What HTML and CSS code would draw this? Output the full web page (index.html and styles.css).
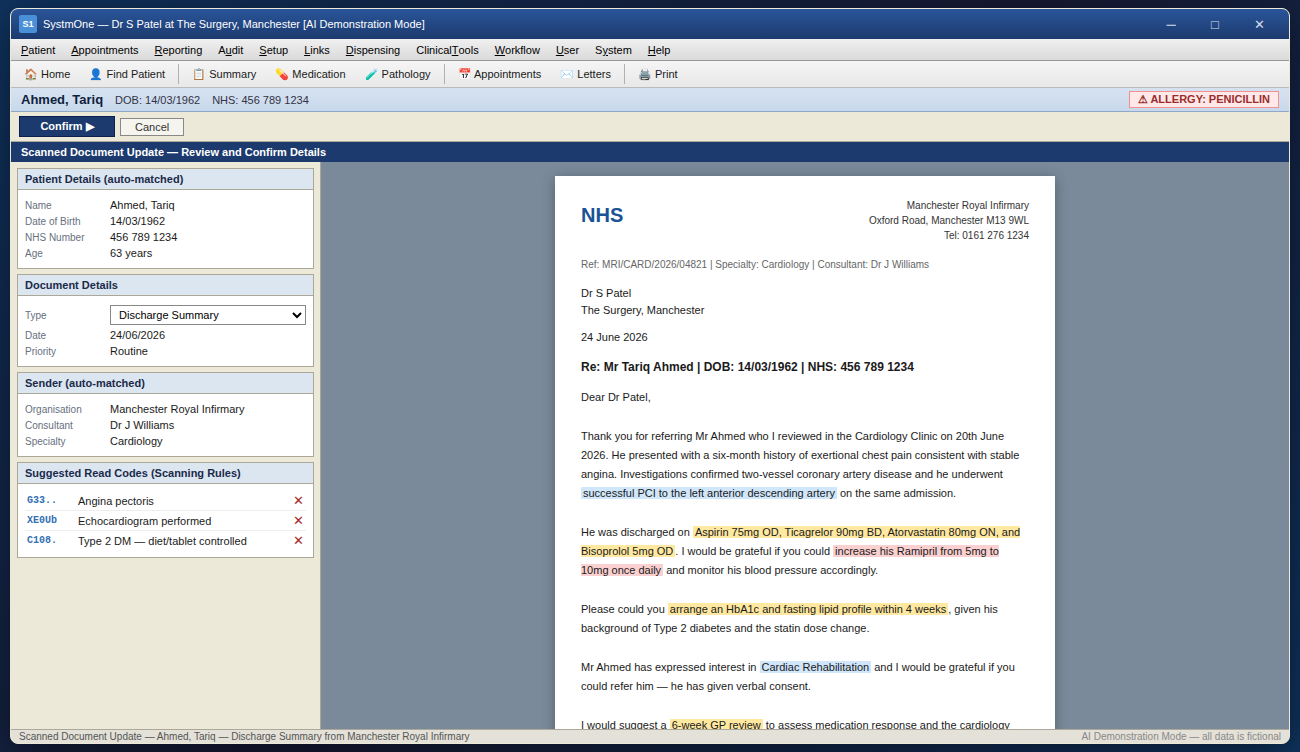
FILE: index.html
```html
<!DOCTYPE html>
<html lang="en">
<head>
<meta charset="utf-8">
<title>SystmOne — Scanned Document Update</title>
<link rel="stylesheet" href="styles.css">
</head>
<body>
<div class="window">
  <header class="titlebar">
    <span class="app-logo">S1</span>
    <span class="app-title">SystmOne — Dr S Patel at The Surgery, Manchester [AI Demonstration Mode]</span>
    <button class="win-btn" type="button" aria-label="Minimise">─</button>
    <button class="win-btn" type="button" aria-label="Maximise">□</button>
    <button class="win-btn" type="button" aria-label="Close">✕</button>
  </header>
  <nav class="menubar">
    <a href="#"><u>P</u>atient</a>
    <a href="#"><u>A</u>ppointments</a>
    <a href="#"><u>R</u>eporting</a>
    <a href="#">A<u>u</u>dit</a>
    <a href="#"><u>S</u>etup</a>
    <a href="#"><u>L</u>inks</a>
    <a href="#"><u>D</u>ispensing</a>
    <a href="#">Clinical<u>T</u>ools</a>
    <a href="#"><u>W</u>orkflow</a>
    <a href="#"><u>U</u>ser</a>
    <a href="#">S<u>y</u>stem</a>
    <a href="#"><u>H</u>elp</a>
  </nav>
  <div class="toolbar">
    <button type="button">🏠 Home</button>
    <button type="button">👤 Find Patient</button>
    <span class="divider"></span>
    <button type="button">📋 Summary</button>
    <button type="button">💊 Medication</button>
    <button type="button">🧪 Pathology</button>
    <span class="divider"></span>
    <button type="button">📅 Appointments</button>
    <button type="button">✉️ Letters</button>
    <span class="divider"></span>
    <button type="button">🖨️ Print</button>
  </div>
  <div class="patient-bar">
    <strong class="patient-name">Ahmed, Tariq</strong>
    <span>DOB: 14/03/1962</span>
    <span>NHS: 456 789 1234</span>
    <strong class="allergy">⚠ ALLERGY: PENICILLIN</strong>
  </div>
  <div class="actions">
    <button class="confirm" type="button">Confirm ▶</button>
    <button class="cancel" type="button">Cancel</button>
  </div>
  <h1 class="section-title">Scanned Document Update — Review and Confirm Details</h1>
  <div class="workspace">
    <aside class="sidebar">
      <section class="card">
        <h2>Patient Details (auto-matched)</h2>
        <dl class="card-body">
          <div class="field"><dt>Name</dt><dd>Ahmed, Tariq</dd></div>
          <div class="field"><dt>Date of Birth</dt><dd>14/03/1962</dd></div>
          <div class="field"><dt>NHS Number</dt><dd>456 789 1234</dd></div>
          <div class="field"><dt>Age</dt><dd>63 years</dd></div>
        </dl>
      </section>
      <section class="card">
        <h2>Document Details</h2>
        <dl class="card-body">
          <div class="field field-select">
            <dt><label for="doc-type">Type</label></dt>
            <dd><select id="doc-type"><option>Discharge Summary</option><option>Clinic Letter</option></select></dd>
          </div>
          <div class="field"><dt>Date</dt><dd>24/06/2026</dd></div>
          <div class="field"><dt>Priority</dt><dd>Routine</dd></div>
        </dl>
      </section>
      <section class="card">
        <h2>Sender (auto-matched)</h2>
        <dl class="card-body">
          <div class="field"><dt>Organisation</dt><dd>Manchester Royal Infirmary</dd></div>
          <div class="field"><dt>Consultant</dt><dd>Dr J Williams</dd></div>
          <div class="field"><dt>Specialty</dt><dd>Cardiology</dd></div>
        </dl>
      </section>
      <section class="card">
        <h2>Suggested Read Codes (Scanning Rules)</h2>
        <ul class="card-body codes">
          <li><code>G33..</code><span>Angina pectoris</span><button type="button" aria-label="Remove G33..">✕</button></li>
          <li><code>XE0Ub</code><span>Echocardiogram performed</span><button type="button" aria-label="Remove XE0Ub">✕</button></li>
          <li><code>C108.</code><span>Type 2 DM — diet/tablet controlled</span><button type="button" aria-label="Remove C108.">✕</button></li>
        </ul>
      </section>
    </aside>
    <main class="viewer">
      <article class="letter">
        <div class="letterhead">
          <strong class="nhs">NHS</strong>
          <address>Manchester Royal Infirmary<br>Oxford Road, Manchester M13 9WL<br>Tel: 0161 276 1234</address>
        </div>
        <p class="reference">Ref: MRI/CARD/2026/04821 | Specialty: Cardiology | Consultant: Dr J Williams</p>
        <p class="recipient">Dr S Patel<br>The Surgery, Manchester</p>
        <p class="date">24 June 2026</p>
        <h3>Re: Mr Tariq Ahmed | DOB: 14/03/1962 | NHS: 456 789 1234</h3>
        <div class="letter-text">
          <p>Dear Dr Patel,</p>
          <p>Thank you for referring Mr Ahmed who I reviewed in the Cardiology Clinic on 20th June 2026. He presented with a six-month history of exertional chest pain consistent with stable angina. Investigations confirmed two-vessel coronary artery disease and he underwent <mark class="info">successful PCI to the left anterior descending artery</mark> on the same admission.</p>
          <p>He was discharged on <mark>Aspirin 75mg OD, Ticagrelor 90mg BD, Atorvastatin 80mg ON, and Bisoprolol 5mg OD</mark>. I would be grateful if you could <mark class="change">increase his Ramipril from 5mg to 10mg once daily</mark> and monitor his blood pressure accordingly.</p>
          <p>Please could you <mark>arrange an HbA1c and fasting lipid profile within 4 weeks</mark>, given his background of Type 2 diabetes and the statin dose change.</p>
          <p>Mr Ahmed has expressed interest in <mark class="info">Cardiac Rehabilitation</mark> and I would be grateful if you could refer him — he has given verbal consent.</p>
          <p>I would suggest a <mark>6-week GP review</mark> to assess medication response and the cardiology</p>
        </div>
      </article>
    </main>
  </div>
  <footer class="statusbar">
    <span>Scanned Document Update — Ahmed, Tariq — Discharge Summary from Manchester Royal Infirmary</span>
    <span class="demo">AI Demonstration Mode — all data is fictional</span>
  </footer>
</div>
</body>
</html>
```
FILE: styles.css
```css
* { box-sizing: border-box; margin: 0; padding: 0; }

body {
  height: 100vh;
  padding: 8px 10px;
  background: linear-gradient(135deg, #0f3460 0%, #171a34 50%, #0f3460 100%);
  font-family: "Liberation Sans", Arial, sans-serif;
  font-size: 11px;
  color: #1a1a1a;
  overflow: hidden;
}

button, select { font: inherit; color: inherit; }
button { background: none; border: 0; white-space: nowrap; }

.window {
  display: flex;
  flex-direction: column;
  height: 100%;
  border: 1px solid #ece9d8;
  border-radius: 8px;
  background: #ece9d8;
  box-shadow: 0 8px 40px rgba(0, 0, 0, 0.5);
  overflow: hidden;
}

.titlebar {
  display: flex;
  flex: none;
  align-items: center;
  height: 30px;
  padding: 0 8px;
  background: linear-gradient(#2a5599, #1c3a6e);
  color: #fff;
}
.app-logo {
  width: 18px;
  margin-right: 6px;
  border-radius: 2px;
  background: #4a90d9;
  font-size: 9px;
  font-weight: bold;
  line-height: 18px;
  text-align: center;
}
.app-title { flex: 1; }
.win-btn { width: 44px; height: 30px; font-size: 13px; color: #d4ddeb; }

.menubar {
  display: flex;
  flex: none;
  height: 22px;
  padding: 0 2px;
  background: linear-gradient(#f0f0f0, #dadada);
  border-bottom: 1px solid #999;
}
.menubar a { padding: 0 8px; line-height: 22px; color: #000; text-decoration: none; }
.menubar u { font-kerning: none; }

.toolbar {
  display: flex;
  flex: none;
  align-items: center;
  gap: 1px;
  height: 27px;
  padding: 0 4px;
  background: linear-gradient(#f5f5f5, #e8e8e8);
  border-bottom: 1px solid #bbb;
}
.toolbar button { padding: 0 9px; line-height: 20px; }
.divider { width: 1px; height: 20px; margin: 0 3px; background: #b0b0b0; }

.patient-bar {
  display: flex;
  flex: none;
  align-items: center;
  gap: 12px;
  height: 24px;
  padding: 0 10px;
  background: linear-gradient(#d6e2f0, #c8d8ec);
  border-bottom: 1px solid #8fa8c8;
  color: #334;
}
.patient-name { font-size: 13px; color: #0f1f3d; }
.allergy {
  margin-left: auto;
  padding: 0 8px;
  border: 1px solid #f09090;
  background: #ffe8e8;
  color: #9b2c2c;
  line-height: 15px;
}

.actions {
  display: flex;
  flex: none;
  align-items: center;
  gap: 5px;
  height: 30px;
  padding: 0 8px;
  border-bottom: 1px solid #aca899;
}
.confirm {
  min-width: 96px;
  padding: 0 20px;
  border: 1px solid #0a2050;
  background: #1c3a6e;
  color: #fff;
  font-weight: bold;
  line-height: 19px;
}
.cancel {
  padding: 0 14px;
  border: 1px solid #888;
  background: #f5f4ee;
  color: #333;
  line-height: 16px;
}

.section-title {
  flex: none;
  padding: 0 10px;
  background: #1c3a6e;
  color: #fff;
  font-size: 11px;
  line-height: 20px;
}

.workspace { display: flex; flex: 1; min-height: 0; }

.sidebar {
  display: flex;
  flex: none;
  flex-direction: column;
  gap: 5px;
  width: 310px;
  padding: 6px;
  border-right: 1px solid #aca899;
  overflow: hidden;
}
.card { border: 1px solid #aca899; background: #fff; }
.card h2 {
  padding: 0 7px;
  border-bottom: 1px solid #aca899;
  background: #dce6f0;
  color: #1a2a4a;
  font-size: 11px;
  line-height: 20px;
}
.card-body { padding: 7px; }
.field { display: flex; align-items: baseline; height: 16px; line-height: 16px; }
.field dt { width: 85px; color: #667080; font-size: 10px; }
.field dd { flex: 1; }
.field-select { height: 24px; padding: 2px 0; }
.field select {
  display: block;
  width: 100%;
  height: 20px;
  padding: 0 4px;
  border: 1px solid #888;
  background: #fff;
  color: #000;
}
.codes { list-style: none; }
.codes li { display: flex; padding: 1px 2px 0; line-height: 18px; }
.codes li + li { border-top: 1px solid #eee; }
.codes code {
  width: 51px;
  color: #3470b4;
  font: bold 10px/18px "Liberation Mono", monospace;
}
.codes span { flex: 1; }
.codes button { color: #a82828; font-size: 13px; line-height: 18px; }

.viewer {
  flex: 1;
  padding: 14px;
  background: #7a8a9a;
  overflow: hidden;
}
.letter {
  max-width: 500px;
  margin: 0 auto;
  padding: 22px 26px;
  background: #fff;
  box-shadow: 0 2px 12px rgba(0, 0, 0, 0.3);
  line-height: 17px;
}
.letterhead { display: flex; justify-content: space-between; align-items: flex-start; }
.nhs { color: #1a5296; font-size: 20px; line-height: 34px; }
.letterhead address {
  color: #333;
  font-size: 10px;
  font-style: normal;
  line-height: 15px;
  text-align: right;
}
.reference { margin: 13px 0 12px; color: #666; font-size: 10px; }
.date { margin: 10px 0 12px; }
.letter h3 { font-size: 12px; line-height: 18px; }
.letter-text {
  display: grid;
  gap: 20px;
  margin-top: 12px;
  line-height: 19px;
}
mark { padding: 0 2px; background: #ffe8a0; color: inherit; }
mark.info { background: #d0e6fa; }
mark.change { background: #fad0d0; }

.statusbar {
  display: flex;
  flex: none;
  justify-content: space-between;
  padding: 0 8px;
  border-top: 1px solid #aca899;
  background: #e4e1d8;
  color: #555;
  font-size: 10px;
  line-height: 13px;
}
.demo { color: #888; }
```
